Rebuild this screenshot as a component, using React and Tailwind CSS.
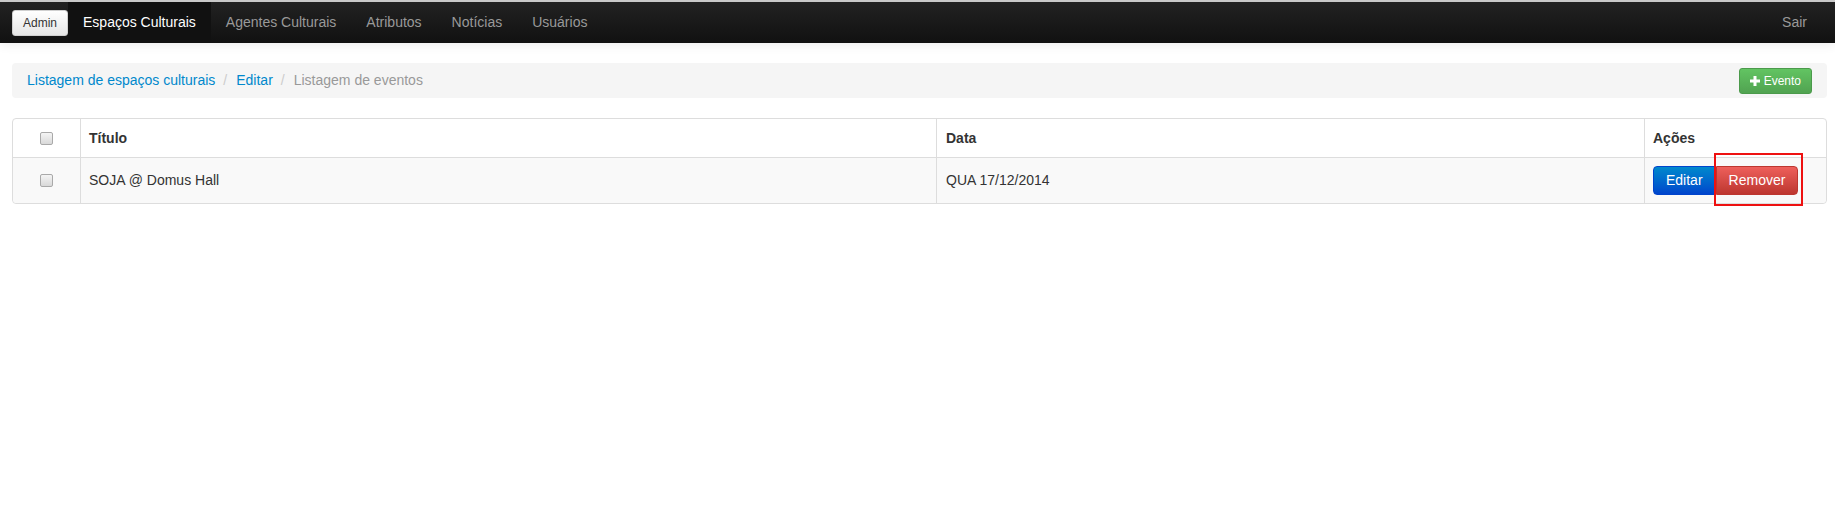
import React from 'react';

const NAV = ['Agentes Culturais', 'Atributos', 'Notícias', 'Usuários'];

function Checkbox() {
  return (
    <span className="inline-block w-[13px] h-[13px] rounded-[2px] border border-[#a9a9a9] bg-gradient-to-b from-[#f4f4f4] to-[#d9d9d9]" />
  );
}

function PlusIcon() {
  return (
    <svg width="10" height="10" viewBox="0 0 10 10" className="mr-[4px]">
      <path d="M3.5 0h3v3.5H10v3H6.5V10h-3V6.5H0v-3h3.5z" fill="#fff" />
    </svg>
  );
}

export default function App() {
  return (
    <div className="min-h-[516px] bg-white text-[#333] text-[14px] font-['Liberation_Sans',Arial,sans-serif]">
      {/* Top bar */}
      <div className="border-t-2 border-[#c9c9c9] shadow-[0_2px_10px_rgba(0,0,0,0.08)]">
        <div className="h-[41px] flex items-stretch pl-3 pr-[13px] bg-gradient-to-b from-[#222222] to-[#111111]">
          <div className="flex items-center">
            <button className="h-[26px] px-[10px] rounded-[3px] border border-[#d0d0d0] bg-gradient-to-b from-white to-[#e6e6e6] text-[12px] text-[#333] leading-none">
              Admin
            </button>
          </div>
          <a className="flex items-center px-[15px] bg-[#111] text-white">Espaços Culturais</a>
          {NAV.map((n) => (
            <a key={n} className="flex items-center px-[15px] text-[#999]">{n}</a>
          ))}
          <div className="flex-1" />
          <a className="flex items-center px-[15px] text-[#999]">Sair</a>
        </div>
      </div>

      <div className="pl-3 pr-2 pt-5">
        {/* Breadcrumb */}
        <div className="h-[35px] flex items-center pl-[15px] pr-[15px] bg-[#f5f5f5] rounded-[4px]">
          <a className="text-[#0088cc]">Listagem de espaços culturais</a>
          <span className="ml-2 mr-[9px] text-[#ccc]">/</span>
          <a className="text-[#0088cc]">Editar</a>
          <span className="ml-2 mr-[9px] text-[#ccc]">/</span>
          <span className="text-[#999]">Listagem de eventos</span>
          <div className="flex-1" />
          <button className="h-[26px] flex items-center px-[10px] rounded-[3px] border border-[#4b9a4b] bg-gradient-to-b from-[#62c462] to-[#51a351] text-white text-[12px]">
            <PlusIcon />
            Evento
          </button>
        </div>

        {/* Table */}
        <div className="mt-5 border border-[#dddddd] rounded-[4px] grid grid-cols-[67px_856px_708px_1fr]">
          <div className="h-[38px] flex items-center justify-center"><Checkbox /></div>
          <div className="h-[38px] flex items-center px-2 border-l border-[#dddddd] font-bold">Título</div>
          <div className="h-[38px] flex items-center px-[9px] border-l border-[#dddddd] font-bold">Data</div>
          <div className="h-[38px] flex items-center px-2 border-l border-[#dddddd] font-bold">Ações</div>

          <div className="h-[46px] flex items-center justify-center border-t border-[#dddddd] bg-[#f9f9f9] rounded-bl-[4px]"><Checkbox /></div>
          <div className="h-[46px] flex items-center px-2 border-t border-l border-[#dddddd] bg-[#f9f9f9]">SOJA @ Domus Hall</div>
          <div className="h-[46px] flex items-center px-[9px] border-t border-l border-[#dddddd] bg-[#f9f9f9]">QUA 17/12/2014</div>
          <div className="h-[46px] flex items-center px-2 border-t border-l border-[#dddddd] bg-[#f9f9f9] rounded-br-[4px]">
            <div className="flex">
              <button className="h-[29px] px-3 rounded-l-[4px] border border-[#0044cc] bg-gradient-to-b from-[#0088cc] to-[#0044cc] text-white">
                Editar
              </button>
              <div className="relative">
                <button className="h-[29px] px-3 rounded-r-[4px] border border-[#bd362f] bg-gradient-to-b from-[#ee5f5b] to-[#bd362f] text-white">
                  Remover
                </button>
                <div className="absolute -left-[2px] -right-[5px] -top-[13px] -bottom-[11px] border-2 border-[#ee1111] pointer-events-none" />
              </div>
            </div>
          </div>
        </div>
      </div>
    </div>
  );
}
